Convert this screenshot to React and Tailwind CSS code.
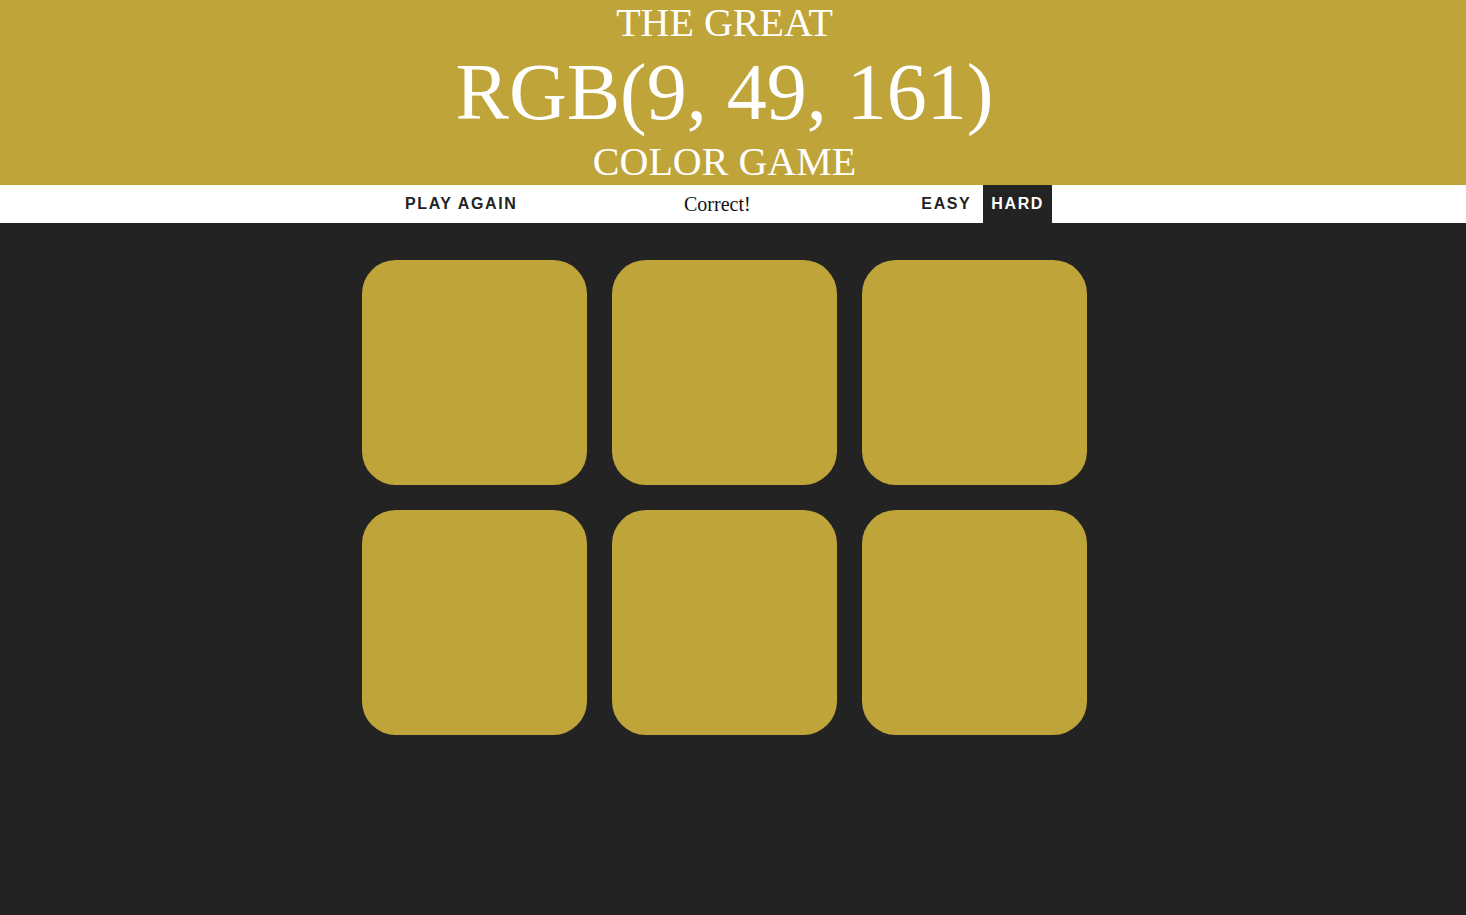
import React from "react";

export default function App() {
  const squares = [0, 1, 2, 3, 4, 5];
  return (
    <div className="min-h-[915px] bg-[#232323]">
      <h1 className="m-0 bg-[#bfa43a] pr-[17px] text-center font-normal uppercase text-white [font-family:'Liberation_Serif','Times_New_Roman',serif]">
        <div className="text-[40px] leading-[46px]">The Great</div>
        <div className="text-[80px] leading-[92px]">RGB(9, 49, 161)</div>
        <div className="text-[40px] leading-[47px]">Color Game</div>
      </h1>
      <div className="flex h-[38px] justify-center bg-white pr-[17px]">
        <button className="h-full px-2 text-[16px] font-bold uppercase tracking-[1.6px] text-[#232323] [font-family:'Liberation_Sans',Arial,sans-serif]">
          Play Again
        </button>
        <div className="flex w-[384px] items-center justify-center text-[20px] text-[#111] [font-family:'Liberation_Serif','Times_New_Roman',serif]">
          Correct!
        </div>
        <div className="flex h-full gap-[4px] pl-[4px]">
          <button className="h-full px-2 text-[16px] font-bold uppercase tracking-[1.6px] text-[#232323] [font-family:'Liberation_Sans',Arial,sans-serif]">
            Easy
          </button>
          <button className="h-full bg-[#232323] px-2 text-[16px] font-bold uppercase tracking-[1.6px] text-white [font-family:'Liberation_Sans',Arial,sans-serif]">
            Hard
          </button>
        </div>
      </div>
      <div className="flex justify-center pr-[17px]">
        <div className="mt-[37px] grid w-[725px] grid-cols-3 gap-[25px]">
          {squares.map((i) => (
            <div key={i} className="h-[225px] w-[225px] rounded-[15%] bg-[#bfa43a]" />
          ))}
        </div>
      </div>
    </div>
  );
}
